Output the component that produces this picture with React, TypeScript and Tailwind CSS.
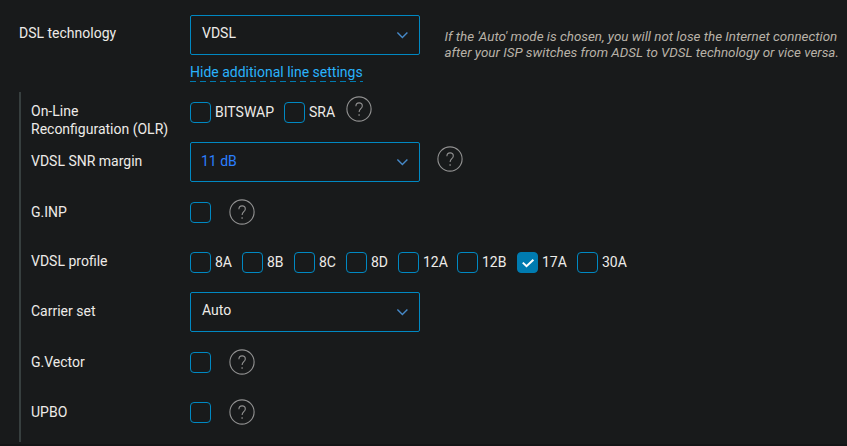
import React from 'react';

function HelpIcon({ className = '' }: { className?: string }) {
  return (
    <svg viewBox="0 0 26 26" className={`w-[26px] h-[26px] shrink-0 ${className}`} fill="none" stroke="#919191">
      <circle cx="13" cy="13" r="12.1" strokeWidth="1.1" />
      <path d="M9.9 10.3c0-2 1.3-3.4 3.2-3.4s3.2 1.2 3.2 3c0 2.8-3.2 2.9-3.2 6.2" strokeWidth="1.1" />
      <path d="M13.1 18.2v1.5" strokeWidth="1.3" />
    </svg>
  );
}

function Checkbox({ checked = false }: { checked?: boolean }) {
  return (
    <span
      className={`flex w-[21px] h-[21px] shrink-0 items-center justify-center rounded-[4px] border ${
        checked ? 'border-[#007bb0] bg-[#007bb0]' : 'border-[#0088c2]'
      }`}
    >
      {checked && (
        <svg viewBox="0 0 19 19" className="w-[19px] h-[19px]" fill="none" stroke="#fff" strokeWidth="2">
          <path d="M4.8 9.6l3.7 3.6 6.9-6.5" />
        </svg>
      )}
    </span>
  );
}

function Option({ label, checked, className }: { label: string; checked?: boolean; className: string }) {
  return (
    <label className={`flex shrink-0 items-center gap-1 ${className}`}>
      <Checkbox checked={checked} />
      <span>{label}</span>
    </label>
  );
}

function Select({ value, changed = false }: { value: string; changed?: boolean }) {
  return (
    <div className="flex w-[230px] h-10 shrink-0 items-center justify-between rounded-[2px] border border-[#0088c2] pr-[11px] pl-[11px]">
      <span className={changed ? '-mt-0.5 -ml-px text-[#2b7fff]' : '-mt-1'}>{value}</span>
      <svg viewBox="0 0 12 8" className="w-3 h-2" fill="none" stroke="#4689c8" strokeWidth="1.4">
        <path d="M1.4 1.4l5 5.2 5-5.2" />
      </svg>
    </div>
  );
}

function Row({ label, labelClass = 'pt-[11px]', children }: { label: React.ReactNode; labelClass?: string; children: React.ReactNode }) {
  return (
    <div className="flex h-[50px] items-start">
      <div className={`w-[159px] shrink-0 leading-[18px] ${labelClass}`}>{label}</div>
      {children}
    </div>
  );
}

const profiles = [
  { label: '8A', width: 'w-[52px]' },
  { label: '8B', width: 'w-[52px]' },
  { label: '8C', width: 'w-[52px]' },
  { label: '8D', width: 'w-[52px]' },
  { label: '12A', width: 'w-[59px]' },
  { label: '12B', width: 'w-[60px]' },
  { label: '17A', width: 'w-[60px]', checked: true },
  { label: '30A', width: 'w-[60px]' },
];

export default function App() {
  return (
    <div className="w-[847px] h-[446px] overflow-hidden border-b-2 border-[#131516] bg-[#181a1b] pt-[15px] pl-[19px] font-[Roboto,sans-serif] text-[14px] text-[#edebe8]">
      <div className="flex h-[77px] items-start">
        <div className="w-[171px] shrink-0 pt-[9px] leading-[18px]">DSL technology</div>
        <div className="w-[230px] shrink-0">
          <Select value="VDSL" />
          <a className="mt-2 flex w-[173px] flex-col text-[#29b2fb]">
            <span className="leading-[18px] whitespace-nowrap">Hide additional line settings</span>
            <span className="h-px bg-[repeating-linear-gradient(90deg,#007bb0_0_6px,transparent_6px_10px)]" />
          </a>
        </div>
        <p className="ml-[24.5px] pt-[14px] text-[13.38px] leading-4 whitespace-nowrap text-[#b8b2a8] italic">
          If the 'Auto' mode is chosen, you will not lose the Internet connection
          <br />
          after your ISP switches from ADSL to VDSL technology or vice versa.
        </p>
      </div>

      <div className="h-[350px] border-l-2 border-[#373f3f] pl-[10px]">
        <Row label={<>On-Line<br />Reconfiguration (OLR)</>} labelClass="pt-[10px]">
          <Option label="BITSWAP" className="mt-[10px] w-[94px]" />
          <Option label="SRA" className="mt-[10px] w-[62px]" />
          <HelpIcon className="mt-1" />
        </Row>
        <Row label="VDSL SNR margin" labelClass="pt-[10px]">
          <Select value="11 dB" changed />
          <HelpIcon className="mt-1 ml-[17px]" />
        </Row>
        <Row label="G.INP">
          <span className="mt-[10px]"><Checkbox /></span>
          <HelpIcon className="mt-[7px] ml-[18px]" />
        </Row>
        <Row label="VDSL profile" labelClass="pt-[10px]">
          {profiles.map((p) => (
            <Option key={p.label} label={p.label} checked={p.checked} className={`mt-[10px] ${p.width}`} />
          ))}
        </Row>
        <Row label="Carrier set" labelClass="pt-[10px]">
          <Select value="Auto" />
        </Row>
        <Row label="G.Vector">
          <span className="mt-[10px]"><Checkbox /></span>
          <HelpIcon className="mt-[7px] ml-[18px]" />
        </Row>
        <Row label="UPBO">
          <span className="mt-[10px]"><Checkbox /></span>
          <HelpIcon className="mt-[7px] ml-[18px]" />
        </Row>
      </div>
    </div>
  );
}
